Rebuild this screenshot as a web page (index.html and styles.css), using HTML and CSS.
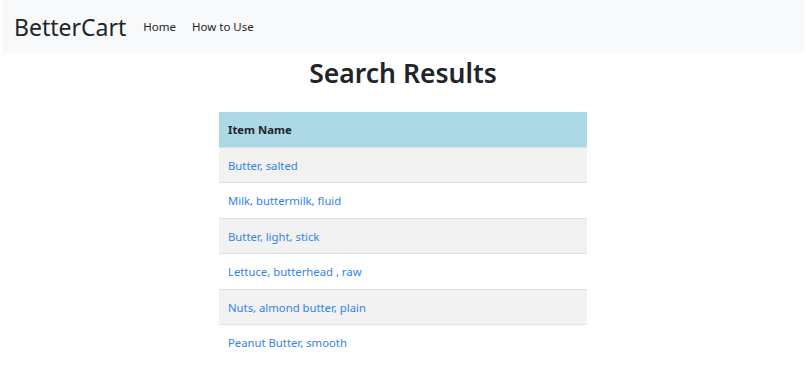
FILE: index.html
```html
<!DOCTYPE html>
<html lang="en">
<head>
    <meta charset="UTF-8">
    <meta name="viewport" content="width=device-width, initial-scale=1.0">
    <title>BetterCart - Search Results</title>
    <link rel="stylesheet" href="styles.css">
</head>
<body>
    <!-- Barra de navegação -->
    <nav class="navbar">
        <a href="#" class="brand">BetterCart</a>
        <ul class="nav-links">
            <li><a href="#">Home</a></li>
            <li><a href="#">How to Use</a></li>
        </ul>
    </nav>

    <main class="content">
        <h1>Search Results</h1>
        <table class="results-table">
            <thead>
                <tr><th>Item Name</th></tr>
            </thead>
            <tbody>
                <tr><td><a href="#">Butter, salted</a></td></tr>
                <tr><td><a href="#">Milk, buttermilk, fluid</a></td></tr>
                <tr><td><a href="#">Butter, light, stick</a></td></tr>
                <tr><td><a href="#">Lettuce, butterhead , raw</a></td></tr>
                <tr><td><a href="#">Nuts, almond butter, plain</a></td></tr>
                <tr><td><a href="#">Peanut Butter, smooth</a></td></tr>
            </tbody>
        </table>
    </main>
</body>
</html>
```

FILE: styles.css
```css
/* Reset */
* {
    margin: 0;
    padding: 0;
    box-sizing: border-box;
}

body {
    font-family: "Noto Sans", "Open Sans", sans-serif;
    background-color: #ffffff;
    color: #212529;
}

/* Barra de navegação */
.navbar {
    display: flex;
    align-items: center;
    height: 53px;
    margin: 0 2px;
    padding: 0 12px;
    background-color: #f8f9fa;
}

.brand {
    font-size: 23px;
    color: #212529;
    text-decoration: none;
    margin-right: 9px;
}

.nav-links {
    display: flex;
    list-style-type: none;
}

.nav-links li a {
    display: block;
    padding: 0 8px;
    font-size: 11.5px;
    color: #212529;
    text-decoration: none;
}

/* Conteúdo */
.content {
    display: flex;
    flex-direction: column;
    align-items: center;
}

h1 {
    font-size: 26.5px;
    font-weight: 600;
    margin-top: 3px;
    margin-bottom: 20px;
    line-height: 1.35;
}

.results-table {
    width: 368px;
    border-collapse: collapse;
    font-size: 11.3px;
}

.results-table th,
.results-table td {
    height: 35.5px;
    padding: 0 9px;
    text-align: left;
    border-top: 1px solid #dee2e6;
}

.results-table th {
    background-color: #add8e6;
    font-weight: 700;
    border-top: none;
}

.results-table tbody tr:nth-child(odd) {
    background-color: #f2f2f2;
}

.results-table td a {
    color: #3483e6;
    text-decoration: none;
}
```
